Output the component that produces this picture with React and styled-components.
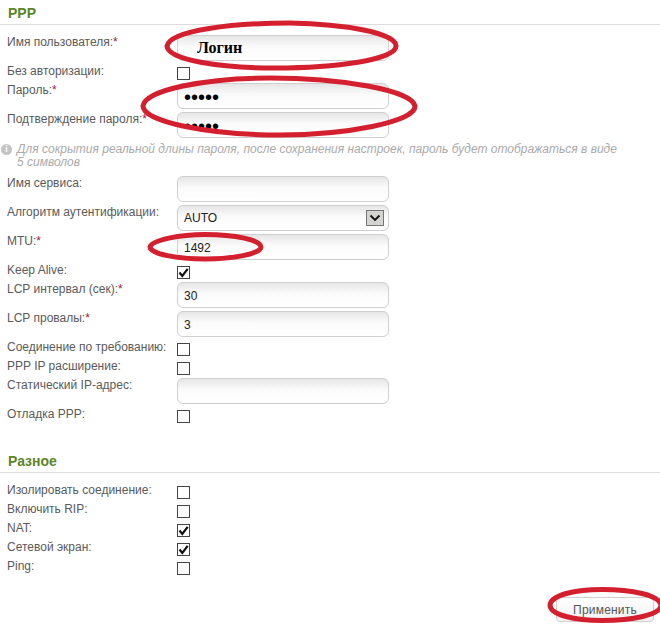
import React from "react";
import styled, { createGlobalStyle } from "styled-components";

const GlobalStyle = createGlobalStyle`
  html, body {
    margin: 0;
    padding: 0;
    background: #fff;
  }
`;

const Page = styled.div`
  position: relative;
  width: 660px;
  height: 624px;
  overflow: hidden;
  font-family: "Liberation Sans", Arial, sans-serif;
  font-size: 12px;
  line-height: 16px;
  color: #5a5a5a;
`;

const Section = styled.section`
  margin-top: ${(p) => p.$top || 0}px;
`;

const SectionTitle = styled.h2`
  height: 24px;
  margin: 0 0 8px;
  padding-left: 8px;
  border-bottom: 1px solid #dcdcdc;
  font-size: 14px;
  line-height: 26px;
  font-weight: bold;
  color: #5c8526;
`;

const Row = styled.div`
  display: flex;
  height: ${(p) => (p.$check ? 19 : 29)}px;
  padding-left: 7px;
`;

const Label = styled.div`
  width: 170px;
  flex: none;
  padding-top: 1px;
  white-space: nowrap;
`;

const Required = styled.span`
  color: #a3203c;
`;

const fieldFont = (p) => {
  if (p.$login) return 'bold 16px "Liberation Serif", serif';
  if (p.type === "password") return '20px "Liberation Sans", sans-serif';
  return '12px "Liberation Sans", sans-serif';
};

const Field = styled.input`
  box-sizing: border-box;
  display: block;
  width: 212px;
  height: 26px;
  margin: 2px 0 0;
  padding: ${(p) => (p.$login ? "0 0 0 19px" : "2px 0 0 6px")};
  border: 1px solid #cfcfcf;
  border-radius: 6px;
  outline: none;
  background: linear-gradient(#e6e6e6, #fbfbfb 45%, #fff);
  font: ${fieldFont};
  color: ${(p) => (p.$login || p.type === "password" ? "#000" : "#222")};
`;

const SelectBox = styled.div`
  box-sizing: border-box;
  display: flex;
  align-items: center;
  justify-content: space-between;
  width: 212px;
  height: 26px;
  margin-top: 2px;
  padding: 0 4px 0 6px;
  border: 1px solid #cfcfcf;
  border-radius: 6px;
  background: linear-gradient(#e6e6e6, #fbfbfb 45%, #fff);
  color: #222;
`;

const SelectArrow = styled.span`
  box-sizing: border-box;
  display: flex;
  align-items: center;
  justify-content: center;
  width: 18px;
  height: 16px;
  border: 1px solid #777;
  background: #d4d4d0;
`;

const Check = styled.span`
  box-sizing: border-box;
  display: flex;
  align-items: center;
  justify-content: center;
  width: 13px;
  height: 13px;
  margin-top: 5px;
  border: 1px solid #444;
  background: #fff;
`;

const Note = styled.div`
  display: flex;
  gap: 5px;
  height: 31px;
  padding: 4px 0 0 1px;
  color: #aaa;
  font-style: italic;
  line-height: 13px;
`;

const NoteIcon = styled.span`
  flex: none;
  display: flex;
  align-items: center;
  justify-content: center;
  width: 11px;
  height: 11px;
  margin-top: 1px;
  border-radius: 50%;
  background: #c4c4c4;
  color: #fff;
  font-size: 9px;
  line-height: 11px;
  font-weight: bold;
  font-style: normal;
`;

const NoteText = styled.div`
  width: 606px;
`;

const Footer = styled.div`
  display: flex;
  justify-content: flex-end;
  padding: 21px 6px 0 0;
`;

const Button = styled.button`
  box-sizing: border-box;
  width: 98px;
  height: 25px;
  padding: 0;
  border: 1px solid #cfcfcf;
  border-radius: 4px;
  background: linear-gradient(#fff, #f1f1f1);
  font-family: "Liberation Sans", sans-serif;
  font-size: 12px;
  letter-spacing: 0.2px;
  color: #555;
`;

const Marker = styled.svg`
  position: absolute;
  left: 0;
  top: 0;
  pointer-events: none;
`;

function CheckMark() {
  return (
    <svg width="11" height="11" viewBox="0 0 11 11">
      <path d="M1.5 5.5 L4.3 9 L9.7 1.8" fill="none" stroke="#111" strokeWidth="2.2" />
    </svg>
  );
}

function CheckRow({ label, checked }) {
  return (
    <Row $check>
      <Label>{label}</Label>
      <Check>{checked && <CheckMark />}</Check>
    </Row>
  );
}

function InputRow({ label, required, ...rest }) {
  return (
    <Row>
      <Label>
        {label}
        {required && <Required>*</Required>}
      </Label>
      <Field readOnly {...rest} />
    </Row>
  );
}

export default function App() {
  return (
    <Page>
      <GlobalStyle />
      <Section>
        <SectionTitle>PPP</SectionTitle>
        <InputRow label="Имя пользователя:" required $login defaultValue="Логин" />
        <CheckRow label="Без авторизации:" />
        <InputRow label="Пароль:" required type="password" defaultValue="12345" />
        <InputRow label="Подтверждение пароля:" required type="password" defaultValue="12345" />
        <Note>
          <NoteIcon>i</NoteIcon>
          <NoteText>
            Для сокрытия реальной длины пароля, после сохранения настроек, пароль будет отображаться в виде 5 символов
          </NoteText>
        </Note>
        <InputRow label="Имя сервиса:" />
        <Row>
          <Label>Алгоритм аутентификации:</Label>
          <SelectBox>
            AUTO
            <SelectArrow>
              <svg width="12" height="8" viewBox="0 0 12 8">
                <path d="M1.5 1.5 L6 6 L10.5 1.5" fill="none" stroke="#111" strokeWidth="1.8" />
              </svg>
            </SelectArrow>
          </SelectBox>
        </Row>
        <InputRow label="MTU:" required defaultValue="1492" />
        <CheckRow label="Keep Alive:" checked />
        <InputRow label="LCP интервал (сек):" required defaultValue="30" />
        <InputRow label="LCP провалы:" required defaultValue="3" />
        <CheckRow label="Соединение по требованию:" />
        <CheckRow label="PPP IP расширение:" />
        <InputRow label="Статический IP-адрес:" />
        <CheckRow label="Отладка PPP:" />
      </Section>
      <Section $top={24}>
        <SectionTitle>Разное</SectionTitle>
        <CheckRow label="Изолировать соединение:" />
        <CheckRow label="Включить RIP:" />
        <CheckRow label="NAT:" checked />
        <CheckRow label="Сетевой экран:" checked />
        <CheckRow label="Ping:" />
      </Section>
      <Footer>
        <Button>Применить</Button>
      </Footer>
      <Marker width="660" height="624" viewBox="0 0 660 624" fill="none" stroke="#d4202e" strokeWidth="5">
        <path d="M167 46 C170 30 235 23 290 23 C345 24 396 33 396 46 C396 60 335 68 275 68 C220 68 168 60 167 46 Z" />
        <path d="M143 106 C145 90 205 78 270 78 C340 78 412 90 415 106 C416 122 345 135 280 135 C210 135 143 122 143 106 Z" />
        <path d="M150 247 C152 240 180 234.5 205 234.5 C235 234.5 261 240 261 247 C261 254 232 259 205 259 C178 259 150 254 150 247 Z" />
        <path d="M550 605 C551 595 575 589.5 602 589.5 C632 589.5 659 595 661 605 C661 615 632 620.5 602 620.5 C575 620.5 550 615 550 605 Z" />
      </Marker>
    </Page>
  );
}
